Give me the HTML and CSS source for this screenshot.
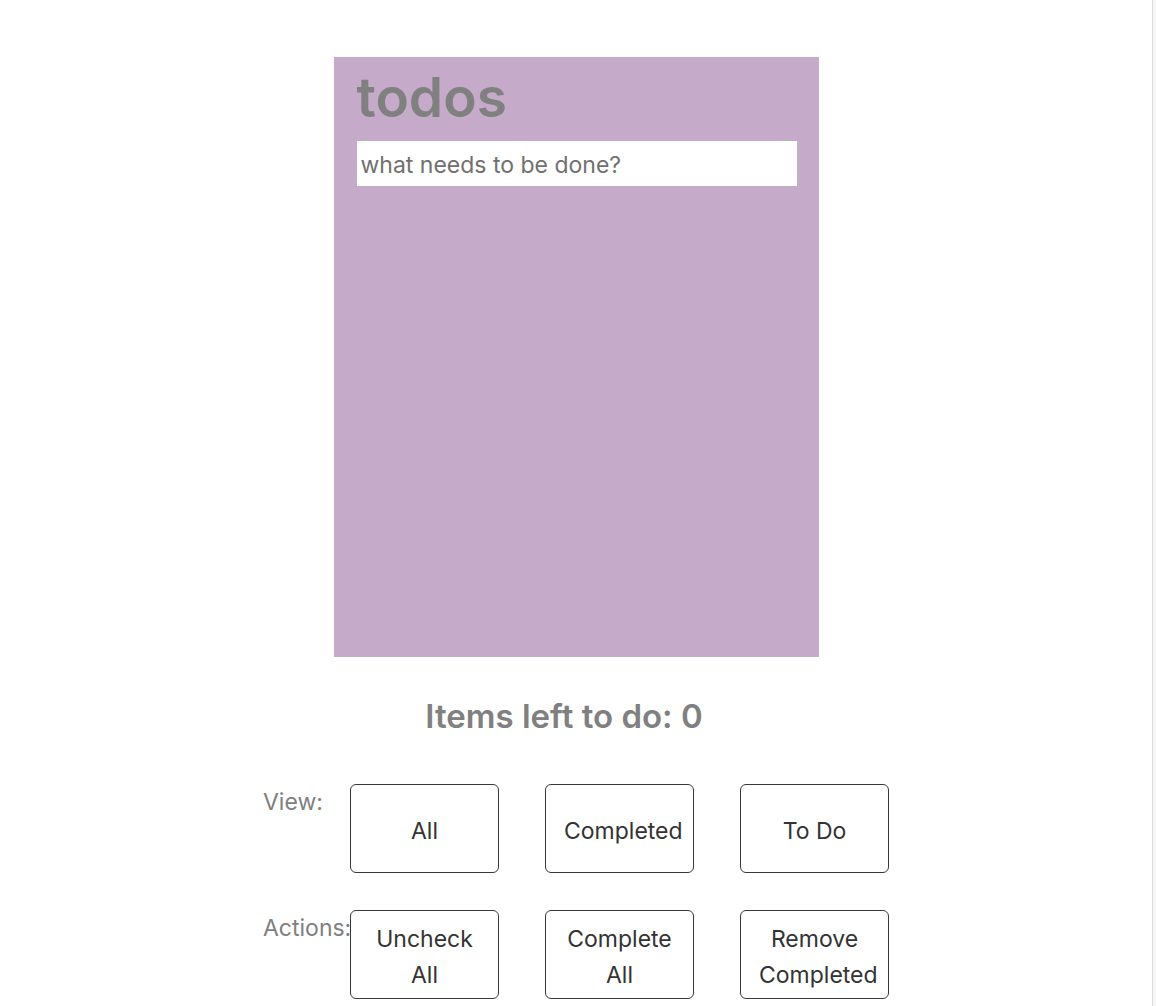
FILE: index.html
```html
<!DOCTYPE html>
<html lang="en">
<head>
  <meta charset="UTF-8" />
  <meta name="viewport" content="width=device-width, initial-scale=1.0" />
  <title>todos</title>
  <link rel="stylesheet" href="styles.css">
</head>
<body>
  <div class="page">
    <div class="todo-box">
      <h1>todos</h1>
      <input type="text" class="new-todo" placeholder="what needs to be done?" />
      <ul class="todo-list"></ul>
    </div>

    <h2 class="count">Items left to do: 0</h2>

    <div class="controls">
      <div class="row">
        <span class="label">View:</span>
        <div class="buttons">
          <button>All</button>
          <button>Completed</button>
          <button>To Do</button>
        </div>
      </div>
      <div class="row">
        <span class="label">Actions:</span>
        <div class="buttons">
          <button>Uncheck All</button>
          <button>Complete All</button>
          <button>Remove Completed</button>
        </div>
      </div>
    </div>
  </div>
</body>
</html>
```

FILE: styles.css
```css
* { box-sizing: border-box; }
html, body {
  margin: 0; height: 100%;
  font-family: Inter, 'Helvetica Neue', sans-serif;
}
body { background: #f6f6f6; }
.page {
  width: calc(100% - 3px); min-height: 100%;
  background: #fff; border-right: 1px solid #dcdcdc;
  padding-top: 57px;
}
.todo-box {
  width: 485px; height: 600px;
  margin: 0 auto; padding: 0 22px 0 23px;
  background: #c5aac9;
}
h1 {
  margin: 0; padding-top: 4px;
  font-size: 55px; font-weight: 600;
  line-height: 72px; color: #808080;
}
.new-todo {
  display: block; width: 440px; height: 45px;
  margin-top: 8px; padding: 2px 4px 0;
  border: none; outline: none; background: #fff;
  font-family: inherit; font-size: 23px; color: #707070;
}
.new-todo::placeholder { color: #707070; }
.todo-list { margin: 0; padding: 0; list-style: none; }
.count {
  margin: 37px 0 0; padding-right: 24px;
  text-align: center; font-size: 33px; font-weight: 600;
  line-height: 44px; color: #808080;
}
.controls {
  width: 626px; margin: 46px auto 0;
  display: flex; flex-direction: column; gap: 37px;
}
.row { display: flex; }
.label {
  width: 87px; padding-top: 5px;
  font-size: 23px; line-height: 26px; color: #808080;
  white-space: nowrap;
}
.buttons { display: flex; gap: 46px; }
button {
  width: 149px; height: 89px; padding: 4px 18px 0;
  background: #fff; border: 1px solid #383838; border-radius: 6px;
  font-family: inherit; font-size: 23px; line-height: 36px; color: #333;
  cursor: pointer;
}
```
